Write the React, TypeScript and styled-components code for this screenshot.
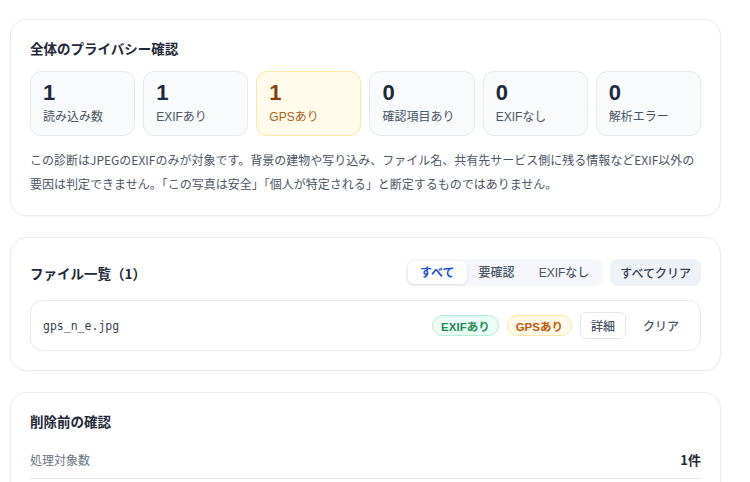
import React from "react";
import styled, { createGlobalStyle } from "styled-components";

const GlobalStyle = createGlobalStyle`
  html, body { margin: 0; padding: 0; background: #ffffff; }
  body {
    font-family: "Noto Sans CJK JP", "Noto Sans", sans-serif;
    color: #1f2937;
    -webkit-font-smoothing: antialiased;
  }
  * { box-sizing: border-box; }
`;

const latinFirst = `"Liberation Sans", "Noto Sans CJK JP", sans-serif`;

const Page = styled.div`
  display: flex;
  flex-direction: column;
  gap: 21px;
  padding: 19px 29px 0 10px;
`;

const Card = styled.section`
  background: #ffffff;
  border: 1px solid #e9ecf0;
  border-radius: 16px;
  padding: 19px;
  box-shadow: 0 1px 2px rgba(15, 23, 42, 0.03);
`;

const Title = styled.h2`
  margin: 0;
  font-size: 13.5px;
  line-height: 18px;
  font-weight: 700;
  color: #1f2937;
`;

const StatGrid = styled.div`
  display: grid;
  grid-template-columns: repeat(6, 1fr);
  gap: 8px;
  margin-top: 14px;
`;

const StatBox = styled.div<{ $warn?: boolean }>`
  display: flex;
  flex-direction: column;
  gap: 3px;
  height: 65px;
  padding: 9px 12px;
  border-radius: 11px;
  border: 1px solid ${(p) => (p.$warn ? "#fbe7a6" : "#e6e9ee")};
  background: ${(p) => (p.$warn ? "#fffbea" : "#f8fafc")};
`;

const StatNumber = styled.div<{ $warn?: boolean }>`
  font-family: "Liberation Sans", "Noto Sans", sans-serif;
  font-size: 22px;
  line-height: 24px;
  font-weight: 700;
  color: ${(p) => (p.$warn ? "#8a3b12" : "#1e293b")};
`;

const StatLabel = styled.div<{ $warn?: boolean }>`
  font-family: ${latinFirst};
  font-size: 12px;
  line-height: 18px;
  color: ${(p) => (p.$warn ? "#b45f1b" : "#4b5563")};
`;

const Note = styled.p`
  margin: 12px 0 0;
  font-size: 12px;
  line-height: 24px;
  color: #4b5563;
`;

const Header = styled.div`
  display: flex;
  align-items: center;
  justify-content: space-between;
  height: 31px;
`;

const Controls = styled.div`
  display: flex;
  align-items: center;
  gap: 7px;
`;

const Segment = styled.div`
  display: flex;
  align-items: center;
  padding: 2px;
  border-radius: 8px;
  background: #f5f7fa;
`;

const SegButton = styled.button<{ $active?: boolean }>`
  border: none;
  font-family: ${latinFirst};
  font-size: 12px;
  line-height: 16px;
  height: 23px;
  padding: 0 12px;
  border-radius: 6px;
  font-weight: ${(p) => (p.$active ? 700 : 500)};
  color: ${(p) => (p.$active ? "#1d4ed8" : "#4b5563")};
  background: ${(p) => (p.$active ? "#ffffff" : "transparent")};
  box-shadow: ${(p) =>
    p.$active ? "0 1px 3px rgba(15, 23, 42, 0.12)" : "none"};
`;

const ClearAll = styled.button`
  border: none;
  font-family: inherit;
  font-size: 12px;
  font-weight: 500;
  height: 27px;
  padding: 0 10px;
  border-radius: 8px;
  color: #374151;
  background: #eef2f7;
`;

const FileRow = styled.div`
  display: flex;
  align-items: center;
  justify-content: space-between;
  height: 51px;
  margin-top: 12px;
  padding: 0 12px;
  border: 1px solid #e6e9ee;
  border-radius: 12px;
`;

const FileName = styled.span`
  font-family: "DejaVu Sans Mono", "Liberation Mono", monospace;
  font-size: 11.5px;
  color: #374151;
`;

const RowActions = styled.div`
  display: flex;
  align-items: center;
  gap: 8px;
`;

const Badge = styled.span<{ $tone: "green" | "amber" }>`
  display: inline-flex;
  align-items: center;
  height: 21px;
  padding: 0 8px;
  border-radius: 999px;
  font-family: ${latinFirst};
  font-size: 11.5px;
  font-weight: 700;
  border: 1px solid ${(p) => (p.$tone === "green" ? "#b5ecd4" : "#fbe3a2")};
  background: ${(p) => (p.$tone === "green" ? "#ecfdf5" : "#fffbeb")};
  color: ${(p) => (p.$tone === "green" ? "#1f8a5b" : "#c2570c")};
`;

const SmallButton = styled.button<{ $outlined?: boolean }>`
  font-family: inherit;
  font-size: 12px;
  font-weight: 500;
  height: 27px;
  padding: 0 ${(p) => (p.$outlined ? 10 : 8)}px;
  border-radius: 6px;
  color: #4b5563;
  background: #ffffff;
  border: 1px solid ${(p) => (p.$outlined ? "#e3e6eb" : "transparent")};
`;

const SummaryRow = styled.div`
  display: flex;
  align-items: center;
  justify-content: space-between;
  margin-top: 12px;
  padding: 9px 0;
  border-bottom: 1px solid #e5e7eb;
`;

const SummaryLabel = styled.span`
  font-size: 12px;
  line-height: 18px;
  color: #6b7280;
`;

const SummaryValue = styled.span`
  font-size: 13px;
  line-height: 18px;
  font-weight: 700;
  color: #1f2937;
`;

const stats = [
  { value: 1, label: "読み込み数" },
  { value: 1, label: "EXIFあり" },
  { value: 1, label: "GPSあり", warn: true },
  { value: 0, label: "確認項目あり" },
  { value: 0, label: "EXIFなし" },
  { value: 0, label: "解析エラー" },
];

export default function App() {
  return (
    <>
      <GlobalStyle />
      <Page>
        <Card>
          <Title>全体のプライバシー確認</Title>
          <StatGrid>
            {stats.map((s) => (
              <StatBox key={s.label} $warn={s.warn}>
                <StatNumber $warn={s.warn}>{s.value}</StatNumber>
                <StatLabel $warn={s.warn}>{s.label}</StatLabel>
              </StatBox>
            ))}
          </StatGrid>
          <Note>
            この診断はJPEGのEXIFのみが対象です。背景の建物や写り込み、ファイル名、共有先サービス側に残る情報などEXIF以外の要因は判定できません。「この写真は安全」「個人が特定される」と断定するものではありません。
          </Note>
        </Card>

        <Card>
          <Header>
            <Title>ファイル一覧（1）</Title>
            <Controls>
              <Segment>
                <SegButton $active>すべて</SegButton>
                <SegButton>要確認</SegButton>
                <SegButton>EXIFなし</SegButton>
              </Segment>
              <ClearAll>すべてクリア</ClearAll>
            </Controls>
          </Header>
          <FileRow>
            <FileName>gps_n_e.jpg</FileName>
            <RowActions>
              <Badge $tone="green">EXIFあり</Badge>
              <Badge $tone="amber">GPSあり</Badge>
              <SmallButton $outlined>詳細</SmallButton>
              <SmallButton>クリア</SmallButton>
            </RowActions>
          </FileRow>
        </Card>

        <Card>
          <Title>削除前の確認</Title>
          <SummaryRow>
            <SummaryLabel>処理対象数</SummaryLabel>
            <SummaryValue>1件</SummaryValue>
          </SummaryRow>
        </Card>
      </Page>
    </>
  );
}
